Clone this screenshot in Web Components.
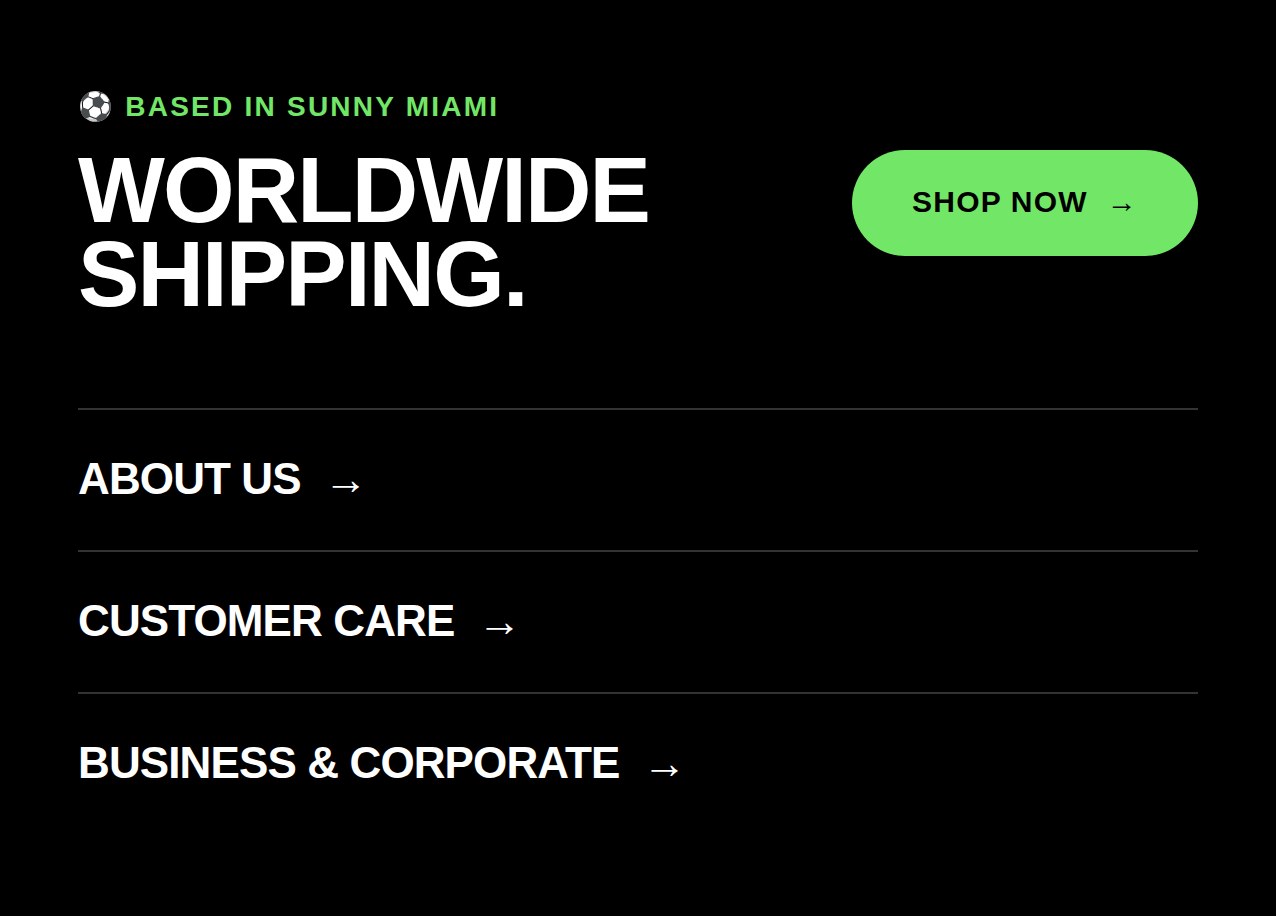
<!DOCTYPE html>
<html lang="en">
<head>
<meta charset="utf-8">
<meta name="viewport" content="width=device-width, initial-scale=1">
<title>Worldwide Shipping</title>
<style>
  body {
    margin: 0;
    background: #000;
    color: #fff;
    font-family: "Liberation Sans", Arial, sans-serif;
    font-weight: 700;
  }
</style>
</head>
<body>
<site-footer>
  <shipping-banner slot="banner" href="#shop">
    <span slot="eyebrow">⚽ Based in Sunny Miami</span>
    <span slot="title">Worldwide<br>Shipping.</span>
    <span slot="action">Shop Now</span>
  </shipping-banner>
  <footer-link href="#about">About Us</footer-link>
  <footer-link href="#care">Customer Care</footer-link>
  <footer-link href="#business">Business &amp; Corporate</footer-link>
</site-footer>

<script>
const template = (html) => {
  const el = document.createElement("template");
  el.innerHTML = html;
  return el;
};

const footerTempl = template(`
<style>
  :host {
    display: block;
    padding: 90px 78px 80px;
  }
  nav {
    display: flex;
    flex-direction: column;
  }
</style>
<footer>
  <slot name="banner"></slot>
  <nav aria-label="Footer"><slot></slot></nav>
</footer>
`);

const bannerTempl = template(`
<style>
  :host {
    display: flex;
    flex-wrap: wrap;
    align-items: center;
    justify-content: space-between;
    gap: 32px;
    padding-bottom: 92px;
    text-transform: uppercase;
  }
  .text {
    display: flex;
    flex-direction: column;
    gap: 24px;
  }
  p, h2 {
    margin: 0;
  }
  p {
    color: #72e767;
    font-size: 28px;
    line-height: 34px;
    letter-spacing: 0.08em;
  }
  h2 {
    font-size: 92px;
    line-height: 84px;
    letter-spacing: -0.02em;
  }
  a {
    display: flex;
    align-items: center;
    gap: 19px;
    padding: 36px 60px 38px;
    border-radius: 60px;
    background: #72e767;
    color: #000;
    font-size: 30px;
    line-height: 32px;
    letter-spacing: 0.04em;
    text-decoration: none;
  }
</style>
<div class="text">
  <p><slot name="eyebrow"></slot></p>
  <h2><slot name="title"></slot></h2>
</div>
<a><slot name="action"></slot><span aria-hidden="true">→</span></a>
`);

const linkTempl = template(`
<style>
  :host {
    display: block;
    border-top: 2px solid #333;
  }
  a {
    display: flex;
    align-items: center;
    gap: 23px;
    padding: 44px 0 46px;
    color: inherit;
    font-size: 44px;
    line-height: 50px;
    letter-spacing: -0.02em;
    text-decoration: none;
    text-transform: uppercase;
  }
</style>
<a><slot></slot><span aria-hidden="true">→</span></a>
`);

class SiteFooter extends HTMLElement {
  constructor() {
    super();
    this.attachShadow({mode: "open"});
    this.shadowRoot.appendChild(footerTempl.content.cloneNode(true));
  }
}

class ShippingBanner extends HTMLElement {
  constructor() {
    super();
    this.attachShadow({mode: "open"});
    this.shadowRoot.appendChild(bannerTempl.content.cloneNode(true));
  }

  connectedCallback() {
    this.shadowRoot.querySelector("a").href = this.getAttribute("href");
  }
}

class FooterLink extends HTMLElement {
  constructor() {
    super();
    this.attachShadow({mode: "open"});
    this.shadowRoot.appendChild(linkTempl.content.cloneNode(true));
  }

  connectedCallback() {
    this.shadowRoot.querySelector("a").href = this.getAttribute("href");
  }
}

customElements.define("site-footer", SiteFooter);
customElements.define("shipping-banner", ShippingBanner);
customElements.define("footer-link", FooterLink);
</script>
</body>
</html>
